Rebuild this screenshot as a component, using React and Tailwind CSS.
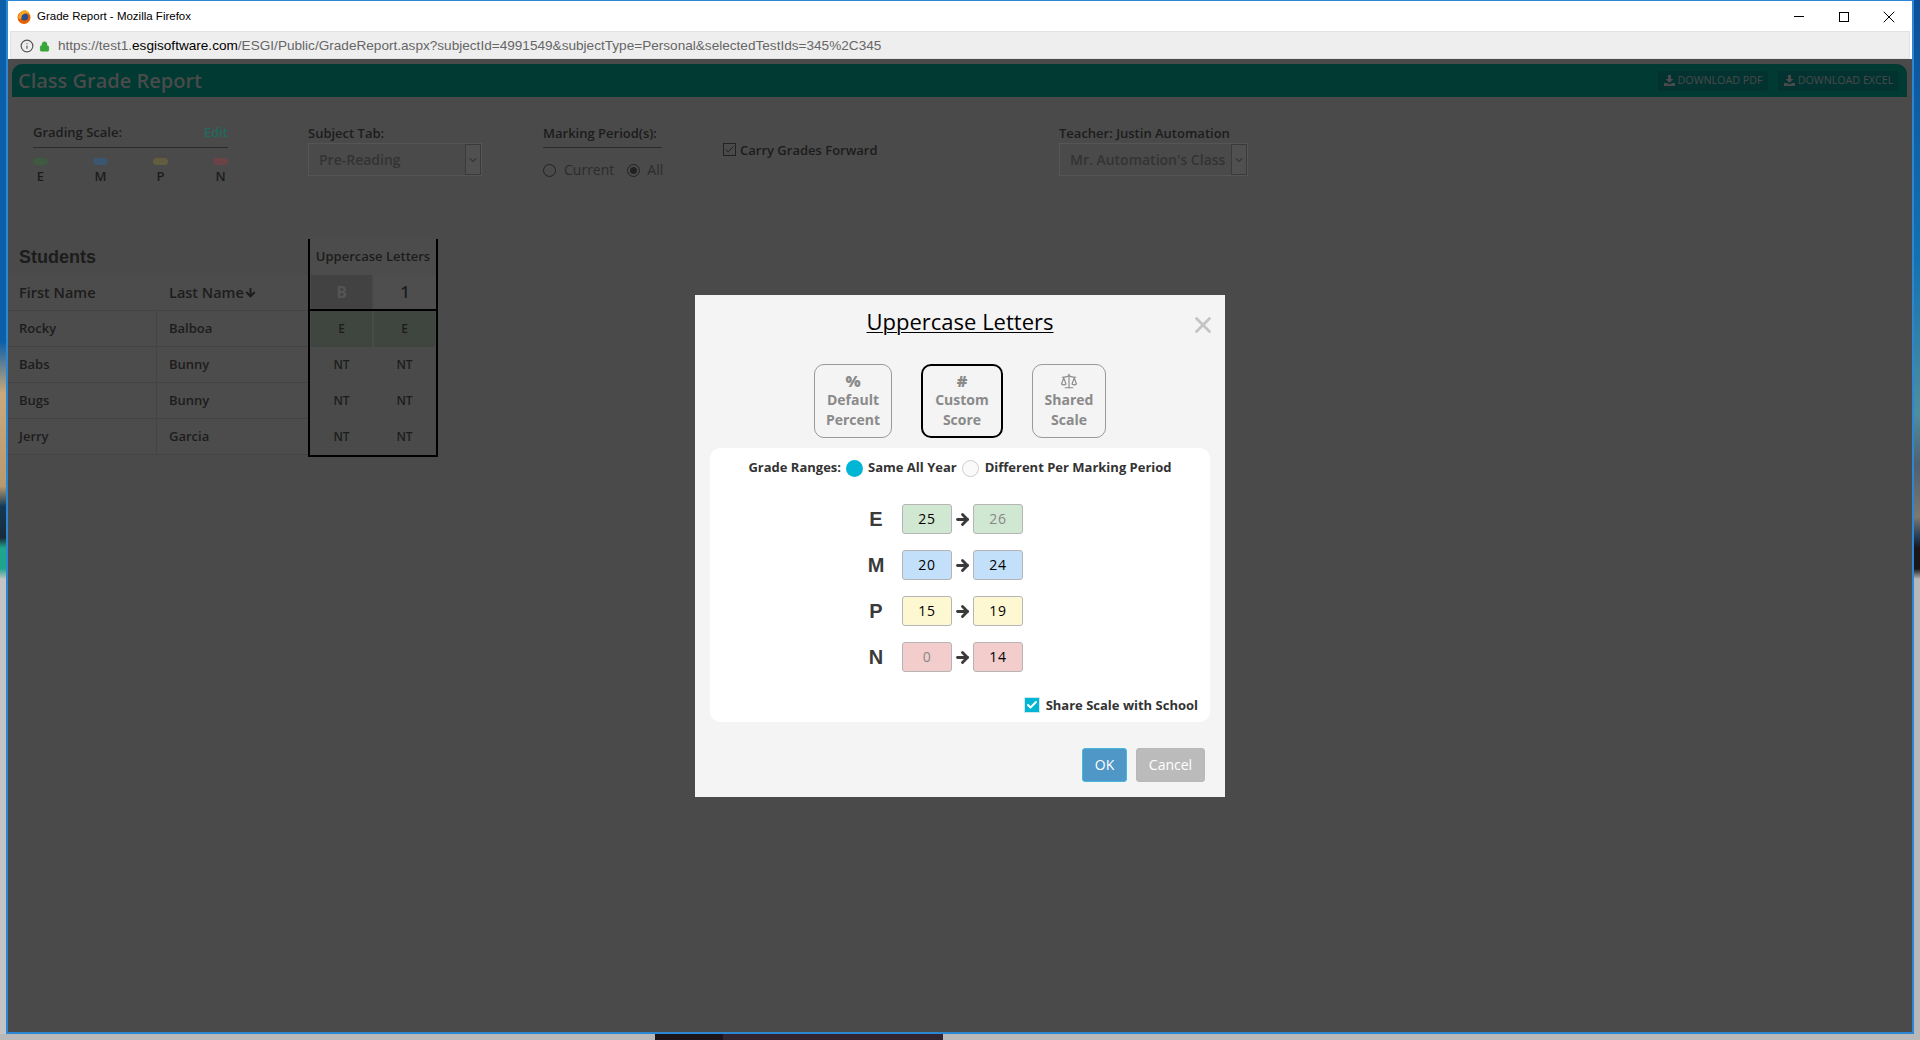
import { Check, ArrowRight, ArrowDown, Scale, X, ChevronDown, Lock, Info } from 'lucide-react';

const font = "font-['Open_Sans','Noto_Sans',sans-serif]";

const students = [
  { first: 'Rocky', last: 'Balboa', grades: ['E', 'E'], bg: 'bg-[#3f463f]' },
  { first: 'Babs', last: 'Bunny', grades: ['NT', 'NT'], bg: '' },
  { first: 'Bugs', last: 'Bunny', grades: ['NT', 'NT'], bg: '' },
  { first: 'Jerry', last: 'Garcia', grades: ['NT', 'NT'], bg: '' },
];

const scale = [
  { letter: 'E', from: '25', to: '26', bg: 'bg-[#d0e7d2]', toMuted: true },
  { letter: 'M', from: '20', to: '24', bg: 'bg-[#c3e0fa]' },
  { letter: 'P', from: '15', to: '19', bg: 'bg-[#fdf8d2]' },
  { letter: 'N', from: '0', to: '14', bg: 'bg-[#f3cccc]', fromMuted: true },
];

const legend = [
  { label: 'E', bg: 'bg-[#3f5a41]' },
  { label: 'M', bg: 'bg-[#3b566f]' },
  { label: 'P', bg: 'bg-[#625d3e]' },
  { label: 'N', bg: 'bg-[#6b4245]' },
];

function Firefox() {
  return (
    <svg width="14" height="16" viewBox="0 0 14 16" className="shrink-0">
      <circle cx="7" cy="8.500" r="6.500" fill="#e66000" />
      <circle cx="7.500" cy="8" r="3.600" fill="#2a4d8f" />
      <path d="M1 9c1-5 4-8 7-8 3 1 5 3 5.500 6C12 4.500 10 4 8 4.500 5.500 5 4 7 4.500 9.500 3 10 2 10 1 9z" fill="#f5a623" />
    </svg>
  );
}

function DownloadIcon() {
  return (
    <svg width="11" height="11" viewBox="0 0 11 11" fill="currentColor" className="shrink-0">
      <path d="M4 0h3v4h2.500L5.500 8 1.500 4H4z" />
      <path d="M0 8h3l1 1h3l1-1h3v3H0z" />
    </svg>
  );
}

function Select({ value, width }) {
  return (
    <div className={`flex h-[33px] items-center border border-[#555] ${width}`}>
      <div className="pl-[10px] text-sm font-semibold text-[#333]">{value}</div>
      <div className="ml-auto flex h-[31px] w-[16px] items-center justify-center border border-[#3a3a3a] bg-[#505050]">
        <ChevronDown size={12} className="text-[#222]" />
      </div>
    </div>
  );
}

function Tab({ icon, label, width, active }) {
  return (
    <div className={`flex h-[74px] flex-col items-center justify-center rounded-[10px] bg-[#f4f4f4] text-sm leading-5 font-bold text-[#8a8a8a] ${width} ${active ? 'border-2 border-black' : 'border border-[#999]'}`}>
      {icon}
      {label.map(l => <div key={l}>{l}</div>)}
    </div>
  );
}

function ScaleInput({ value, bg, muted }) {
  return (
    <div className={`flex h-[30px] w-[50px] items-center justify-center rounded-[3px] border border-[#b5b5b5] text-sm tracking-wider ${bg} ${muted ? 'text-[#888]' : 'text-black'}`}>
      {value}
    </div>
  );
}

export default function App() {
  return (
    <div className={`${font} relative flex h-[1040px] w-[1920px] flex-col overflow-hidden`}>
      <div className="flex h-[1034px] shrink-0">
        {/* Desktop showing at the left */}
        <div className="w-[6px] shrink-0 bg-[linear-gradient(to_bottom,#0b5fa8_0%,#0b5fa8_33%,#c9a87c_38%,#b89a70_47%,#123a55_49%,#1a2a3a_52%,#1fa58c_53%,#1fa58c_55%,#c4c4c4_56%,#c4c4c4_100%)]" />

        {/* Window */}
        <div className="flex w-[1908px] shrink-0 flex-col border-x-2 border-t border-b-2 border-x-[#2b87d3] border-t-[#2b87d3] border-b-[#2b87d3] bg-white">
          <div className="flex h-[30px] shrink-0 items-center bg-white pt-[1px] pl-[9px]">
            <Firefox />
            <span className="ml-[6px] font-['Liberation_Sans',sans-serif] text-[11.500px] text-black">Grade Report - Mozilla Firefox</span>
            <div className="ml-auto flex items-center gap-[25px] pr-[13px]">
              <div className="flex w-[20px] justify-center"><div className="h-px w-[10px] bg-black" /></div>
              <div className="flex w-[20px] justify-center"><div className="h-[10px] w-[10px] border border-black" /></div>
              <X size={20} strokeWidth={1.200} className="text-black" />
            </div>
          </div>
          <div className="mx-[2px] flex h-[28px] shrink-0 items-center border border-[#e2e2e2] bg-[#eeeeee] pt-[2px] pl-[9px]">
            <Info size={14} className="text-[#555]" />
            <Lock size={11} fill="#3aa63a" className="ml-[5px] text-[#3aa63a]" />
            <span className="ml-[8px] font-['Liberation_Sans',sans-serif] text-[13.600px] text-[#666]">
              https://test1.<span className="text-black">esgisoftware.com</span>/ESGI/Public/GradeReport.aspx?subjectId=4991549&subjectType=Personal&selectedTestIds=345%2C345
            </span>
          </div>

          {/* Page dimmed behind the dialog */}
          <div className="flex min-h-0 flex-1 flex-col bg-[#4a4a4a] pt-[5px]">
            <div className="ml-[4px] mr-[5px] flex h-[33px] shrink-0 items-center rounded-t-[10px] bg-[#013a33] pl-[6px] pr-[8px]">
              <span className="text-xl font-semibold text-[#4a4a4a]">Class Grade Report</span>
              <div className="ml-auto flex gap-[10px]">
                <div className="flex h-[20px] w-[110px] items-center justify-center gap-[3px] rounded-[3px] border border-[#04322e] bg-[#033330] text-[10.700px] text-[#4a4a4a]">
                  <DownloadIcon /> DOWNLOAD PDF
                </div>
                <div className="flex h-[20px] w-[121px] items-center justify-center gap-[3px] rounded-[3px] border border-[#04322e] bg-[#033330] text-[10.700px] text-[#4a4a4a]">
                  <DownloadIcon /> DOWNLOAD EXCEL
                </div>
              </div>
            </div>

            {/* Filters */}
            <div className="flex h-[142px] shrink-0 pt-[27px] pl-[25px] text-[13px] text-[#1c1c1c]">
              <div className="w-[275px]">
                <div className="flex h-[17px] w-[195px] items-center justify-between font-semibold">
                  <span>Grading Scale:</span>
                  <span className="text-[#1f6b5c]">Edit</span>
                </div>
                <div className="mt-[6px] w-[195px] border-t border-[#2c2c2c]" />
                <div className="mt-[10px] flex w-[195px] justify-between">
                  {legend.map(l => (
                    <div key={l.label} className="flex w-[15px] flex-col items-center">
                      <div className={`h-[7px] w-[15px] rounded-full ${l.bg}`} />
                      <span className="mt-[2px] font-semibold">{l.label}</span>
                    </div>
                  ))}
                </div>
              </div>
              <div className="w-[235px]">
                <div className="h-[19px] font-semibold">Subject Tab:</div>
                <Select value="Pre-Reading" width="w-[174px]" />
              </div>
              <div className="w-[180px]">
                <div className="h-[17px] w-[119px] whitespace-nowrap font-semibold">Marking Period(s):</div>
                <div className="mt-[6px] w-[119px] border-t border-[#2c2c2c]" />
                <div className="mt-[12px] flex items-center text-sm text-[#2c2c2c]">
                  <div className="h-[13px] w-[13px] rounded-full border border-[#222]" />
                  <span className="ml-[8px]">Current</span>
                  <div className="ml-[13px] flex h-[13px] w-[13px] items-center justify-center rounded-full border border-[#222]">
                    <div className="h-[7px] w-[7px] rounded-full bg-[#222]" />
                  </div>
                  <span className="ml-[7px]">All</span>
                </div>
              </div>
              <div className="w-[336px] pt-[17px]">
                <div className="flex items-center gap-[4px] font-semibold">
                  <div className="-mt-[2px] flex h-[13px] w-[13px] items-center justify-center border border-[#222]">
                    <Check size={11} />
                  </div>
                  Carry Grades Forward
                </div>
              </div>
              <div>
                <div className="h-[19px] font-semibold">Teacher: Justin Automation</div>
                <Select value="Mr. Automation's Class" width="w-[189px]" />
              </div>
            </div>

            {/* Students table */}
            <div className="flex shrink-0 text-[#1c1c1c]">
              <div className="w-[300px]">
                <div className="flex h-[36px] items-center pl-[11px] font-['Liberation_Sans',sans-serif] text-lg font-bold">Students</div>
                <div className="flex h-[36px] items-center border-b border-[#444] bg-[#4c4c4c] text-[14.500px] font-semibold">
                  <div className="w-[161px] pl-[11px]">First Name</div>
                  <div className="flex items-center">Last Name<ArrowDown size={13} strokeWidth={3.500} /></div>
                </div>
                {students.map(s => (
                  <div key={s.first} className="flex h-[36px] items-center border-b border-[#444] bg-[#4c4c4c] text-[13px] font-semibold">
                    <div className="flex h-full w-[149px] items-center border-r border-[#444] pl-[11px]">{s.first}</div>
                    <div className="pl-[12px]">{s.last}</div>
                  </div>
                ))}
              </div>
              <div className="h-[218px] w-[130px] border-x-2 border-b-2 border-black">
                <div className="flex h-[36px] items-center justify-center bg-[#4c4c4c] text-[13px] font-semibold whitespace-nowrap">Uppercase Letters</div>
                <div className="flex h-[36px] gap-[2px] border-b-2 border-black pl-[1px]">
                  <div className="flex w-[61px] items-center justify-center bg-[#424242] text-base font-bold text-[#555]">B</div>
                  <div className="flex w-[62px] items-center justify-center bg-[#4e4e4e] text-base font-semibold">1</div>
                </div>
                {students.map(s => (
                  <div key={s.first} className="flex h-[36px] gap-[2px] pl-[1px] text-xs font-semibold">
                    {s.grades.map((g, i) => (
                      <div key={i} className={`flex w-[61px] items-center justify-center ${s.bg}`}>{g}</div>
                    ))}
                  </div>
                ))}
              </div>
            </div>
          </div>
        </div>

        {/* Desktop showing at the right */}
        <div className="w-[6px] shrink-0 bg-[linear-gradient(to_bottom,#0b4f9a_0%,#1272b0_25%,#4f8ea0_40%,#50606e_45%,#7d7770_50%,#233a50_52%,#1b1418_53%,#1b1418_55%,#b8b8b8_56%,#b8b8b8_100%)]" />
      </div>

      {/* Taskbar edge below the window */}
      <div className="flex h-[6px] shrink-0">
        <div className="w-[655px] bg-[#b8b8b8]" />
        <div className="w-[68px] bg-[#1b1418]" />
        <div className="w-[220px] bg-[#33252f]" />
        <div className="flex-1 bg-[#b8b8b8]" />
      </div>

      {/* Dialog */}
      <div className="absolute left-[695px] top-[295px] flex h-[502px] w-[530px] flex-col bg-[#f4f4f4]">
        <div className="relative flex h-[69px] shrink-0 justify-center pt-[11px]">
          <span className="h-[30px] text-[22px] leading-[30px] text-black underline decoration-1 underline-offset-2">Uppercase Letters</span>
          <X size={26} strokeWidth={2.600} className="absolute right-[9px] top-[17px] text-[#c4c4c4]" />
        </div>
        <div className="flex h-[74px] shrink-0 justify-center">
          <div className="flex gap-[29px]">
            <Tab width="w-[78px]" label={['Default', 'Percent']} icon={<span className="text-base leading-[18px] font-black">%</span>} />
            <Tab width="w-[82px]" active label={['Custom', 'Score']} icon={<span className="text-base leading-[18px] font-black">#</span>} />
            <Tab width="w-[74px]" label={['Shared', 'Scale']} icon={<Scale size={18} strokeWidth={1.500} />} />
          </div>
        </div>
        <div className="mx-[15px] mt-[10px] flex h-[274px] shrink-0 flex-col rounded-[10px] bg-white">
          <div className="flex h-[40px] shrink-0 items-center justify-center text-[13px] font-bold text-[#333]">
            <span>Grade Ranges:</span>
            <div className="ml-[5px] h-[17px] w-[17px] rounded-full bg-[#00b6d4]" />
            <span className="ml-[5px]">Same All Year</span>
            <div className="ml-[5px] h-[17px] w-[17px] rounded-full border border-[#ccc] bg-[#fafafa]" />
            <span className="ml-[6px]">Different Per Marking Period</span>
          </div>
          <div className="mt-[16px] flex flex-col gap-[16px] pl-[154px]">
            {scale.map(r => (
              <div key={r.letter} className="flex h-[30px] items-center">
                <span className="w-[24px] text-center font-['Liberation_Sans',sans-serif] text-xl font-bold text-[#3a3a3a]">{r.letter}</span>
                <div className="ml-[14px]"><ScaleInput value={r.from} bg={r.bg} muted={r.fromMuted} /></div>
                <ArrowRight size={17} strokeWidth={4} className="mx-[2px] text-[#3a3a3a]" />
                <ScaleInput value={r.to} bg={r.bg} muted={r.toMuted} />
              </div>
            ))}
          </div>
          <div className="mt-auto mb-[7px] flex items-center justify-end pr-[12px] text-[13px] font-bold text-[#333]">
            <div className="flex h-[16px] w-[16px] items-center justify-center border border-[#cfe7ee] bg-[#00b6d4]">
              <Check size={12} strokeWidth={4} className="text-white" />
            </div>
            <span className="ml-[6px]">Share Scale with School</span>
          </div>
        </div>
        <div className="flex flex-1 items-start justify-end gap-[9px] pt-[26px] pr-[20px]">
          <div className="flex h-[34px] w-[45px] items-center justify-center rounded-[3px] border border-[#46b8da] bg-[#4f97c6] text-sm text-white">OK</div>
          <div className="flex h-[34px] w-[69px] items-center justify-center rounded-[3px] border border-[#b8b8b8] bg-[#bbbbbb] text-sm text-white">Cancel</div>
        </div>
      </div>
    </div>
  );
}
